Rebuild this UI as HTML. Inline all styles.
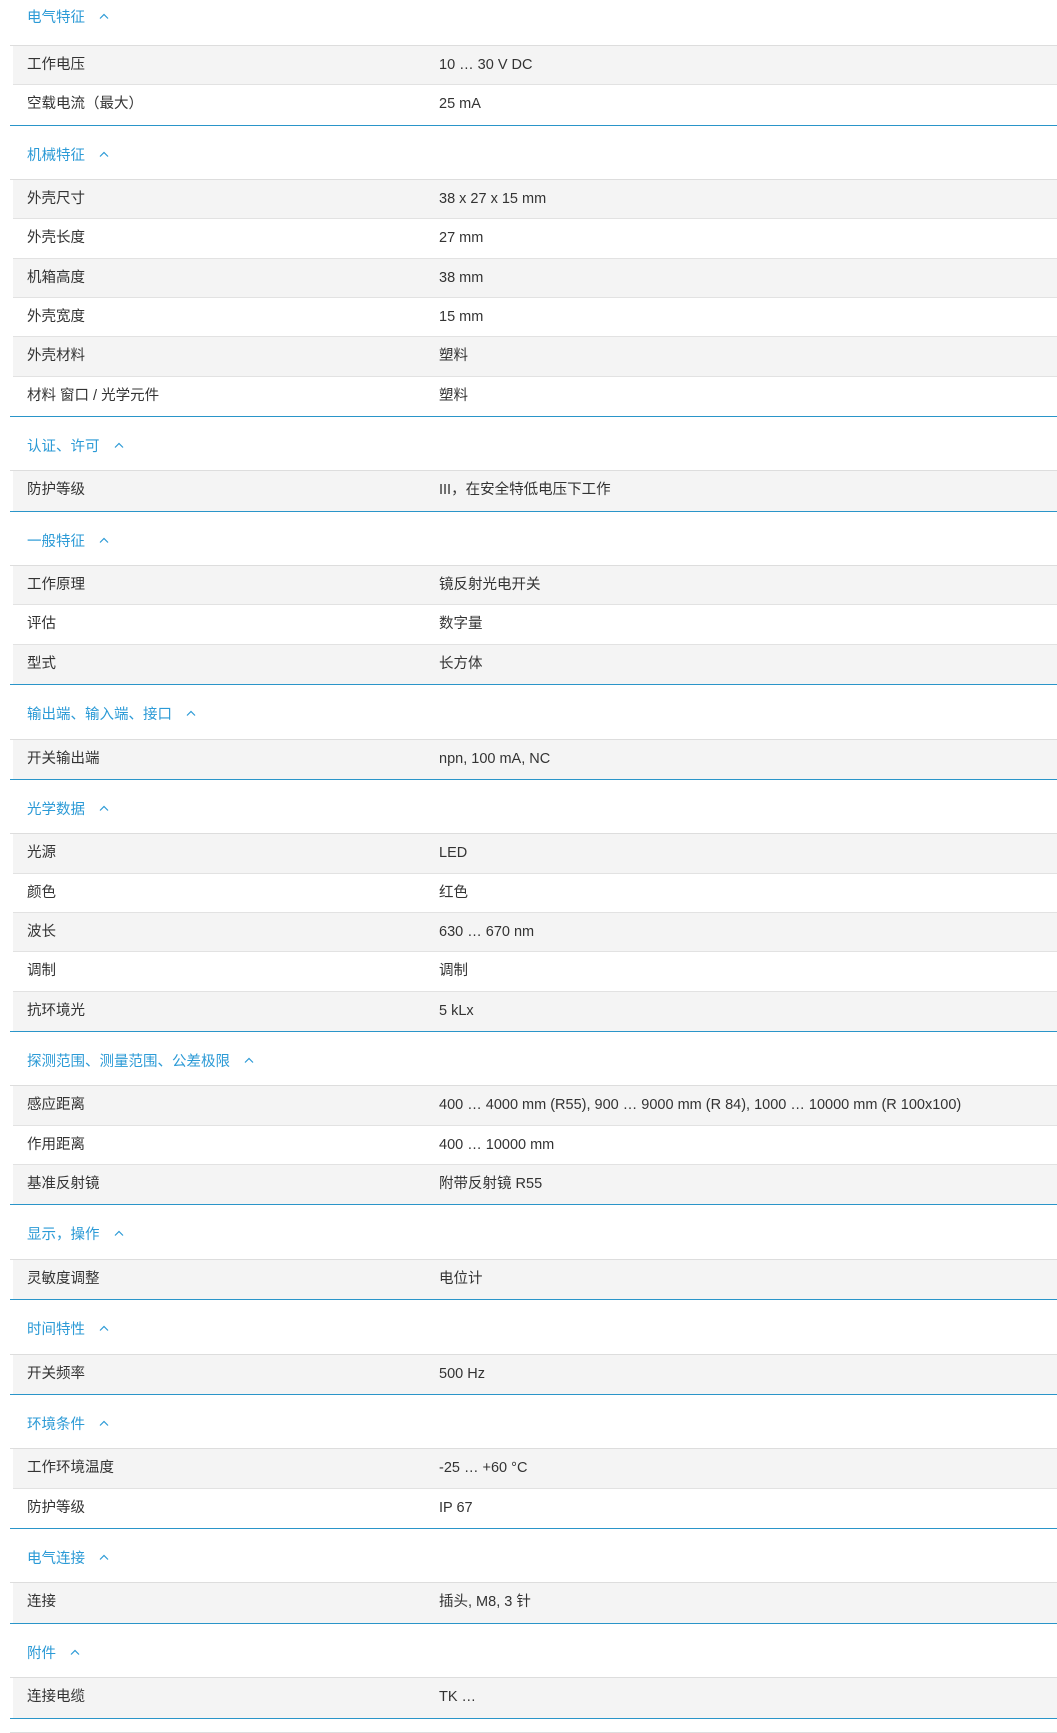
<!DOCTYPE html>
<html><head><meta charset="utf-8"><style>
*{margin:0;padding:0;box-sizing:border-box}
body{width:1057px;height:1710px;background:#fff;font-family:"Liberation Sans","Noto Sans CJK SC",sans-serif;font-size:14.5px;color:#333;overflow:hidden}
.wrap{position:absolute;left:10px;top:0;width:1047px}
.sec{border-bottom:1px solid #2a95c9}
.h{height:54.5px;padding-top:22px;padding-left:17px;color:#2b9ad6;font-size:14.5px;line-height:16px;border-bottom:1px solid #ddd}
.first .h{height:46px;padding-top:10px}
.h svg{margin-left:14px;vertical-align:middle;position:relative;top:-2px}
.r{height:39.3px;margin-left:3px;line-height:38px;white-space:nowrap;border-bottom:1px solid #e2e2e2}
.r:last-child{border-bottom:none}
.r:nth-child(even){background:#f4f4f4}
.r .k{display:inline-block;width:426px;padding-left:14px;vertical-align:baseline}
</style></head><body><div class="wrap">
<div class="sec first"><div class="h">电气特征<svg width="10" height="6" viewBox="0 0 10 6"><path d="M1 5.5L5 1.5L9 5.5" fill="none" stroke="#2b9ad6" stroke-width="1.2"/></svg></div>
<div class="r"><span class="k">工作电压</span><span>10 … 30 V DC</span></div>
<div class="r"><span class="k">空载电流（最大）</span><span>25 mA</span></div></div>
<div class="sec"><div class="h">机械特征<svg width="10" height="6" viewBox="0 0 10 6"><path d="M1 5.5L5 1.5L9 5.5" fill="none" stroke="#2b9ad6" stroke-width="1.2"/></svg></div>
<div class="r"><span class="k">外壳尺寸</span><span>38 x 27 x 15 mm</span></div>
<div class="r"><span class="k">外壳长度</span><span>27 mm</span></div>
<div class="r"><span class="k">机箱高度</span><span>38 mm</span></div>
<div class="r"><span class="k">外壳宽度</span><span>15 mm</span></div>
<div class="r"><span class="k">外壳材料</span><span>塑料</span></div>
<div class="r"><span class="k">材料 窗口 / 光学元件</span><span>塑料</span></div></div>
<div class="sec"><div class="h">认证、许可<svg width="10" height="6" viewBox="0 0 10 6"><path d="M1 5.5L5 1.5L9 5.5" fill="none" stroke="#2b9ad6" stroke-width="1.2"/></svg></div>
<div class="r"><span class="k">防护等级</span><span>III，在安全特低电压下工作</span></div></div>
<div class="sec"><div class="h">一般特征<svg width="10" height="6" viewBox="0 0 10 6"><path d="M1 5.5L5 1.5L9 5.5" fill="none" stroke="#2b9ad6" stroke-width="1.2"/></svg></div>
<div class="r"><span class="k">工作原理</span><span>镜反射光电开关</span></div>
<div class="r"><span class="k">评估</span><span>数字量</span></div>
<div class="r"><span class="k">型式</span><span>长方体</span></div></div>
<div class="sec"><div class="h">输出端、输入端、接口<svg width="10" height="6" viewBox="0 0 10 6"><path d="M1 5.5L5 1.5L9 5.5" fill="none" stroke="#2b9ad6" stroke-width="1.2"/></svg></div>
<div class="r"><span class="k">开关输出端</span><span>npn, 100 mA, NC</span></div></div>
<div class="sec"><div class="h">光学数据<svg width="10" height="6" viewBox="0 0 10 6"><path d="M1 5.5L5 1.5L9 5.5" fill="none" stroke="#2b9ad6" stroke-width="1.2"/></svg></div>
<div class="r"><span class="k">光源</span><span>LED</span></div>
<div class="r"><span class="k">颜色</span><span>红色</span></div>
<div class="r"><span class="k">波长</span><span>630 … 670 nm</span></div>
<div class="r"><span class="k">调制</span><span>调制</span></div>
<div class="r"><span class="k">抗环境光</span><span>5 kLx</span></div></div>
<div class="sec"><div class="h">探测范围、测量范围、公差极限<svg width="10" height="6" viewBox="0 0 10 6"><path d="M1 5.5L5 1.5L9 5.5" fill="none" stroke="#2b9ad6" stroke-width="1.2"/></svg></div>
<div class="r"><span class="k">感应距离</span><span>400 … 4000 mm (R55), 900 … 9000 mm (R 84), 1000 … 10000 mm (R 100x100)</span></div>
<div class="r"><span class="k">作用距离</span><span>400 … 10000 mm</span></div>
<div class="r"><span class="k">基准反射镜</span><span>附带反射镜 R55</span></div></div>
<div class="sec"><div class="h">显示，操作<svg width="10" height="6" viewBox="0 0 10 6"><path d="M1 5.5L5 1.5L9 5.5" fill="none" stroke="#2b9ad6" stroke-width="1.2"/></svg></div>
<div class="r"><span class="k">灵敏度调整</span><span>电位计</span></div></div>
<div class="sec"><div class="h">时间特性<svg width="10" height="6" viewBox="0 0 10 6"><path d="M1 5.5L5 1.5L9 5.5" fill="none" stroke="#2b9ad6" stroke-width="1.2"/></svg></div>
<div class="r"><span class="k">开关频率</span><span>500 Hz</span></div></div>
<div class="sec"><div class="h">环境条件<svg width="10" height="6" viewBox="0 0 10 6"><path d="M1 5.5L5 1.5L9 5.5" fill="none" stroke="#2b9ad6" stroke-width="1.2"/></svg></div>
<div class="r"><span class="k">工作环境温度</span><span>-25 … +60 °C</span></div>
<div class="r"><span class="k">防护等级</span><span>IP 67</span></div></div>
<div class="sec"><div class="h">电气连接<svg width="10" height="6" viewBox="0 0 10 6"><path d="M1 5.5L5 1.5L9 5.5" fill="none" stroke="#2b9ad6" stroke-width="1.2"/></svg></div>
<div class="r"><span class="k">连接</span><span>插头, M8, 3 针</span></div></div>
<div class="sec"><div class="h">附件<svg width="10" height="6" viewBox="0 0 10 6"><path d="M1 5.5L5 1.5L9 5.5" fill="none" stroke="#2b9ad6" stroke-width="1.2"/></svg></div>
<div class="r"><span class="k">连接电缆</span><span>TK …</span></div></div>
<div style="height:14px;border-bottom:1px solid #ddd"></div>
</div></body></html>
